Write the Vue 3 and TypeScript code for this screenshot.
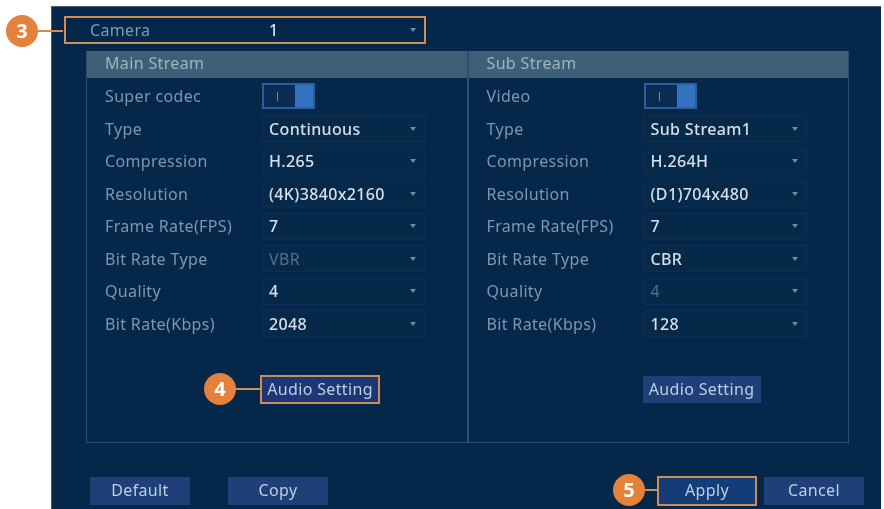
<script setup lang="ts">
interface Row {
  label: string
  value?: string
  toggle?: boolean
  disabled?: boolean
}

const mainRows: Row[] = [
  { label: 'Super codec', toggle: true },
  { label: 'Type', value: 'Continuous' },
  { label: 'Compression', value: 'H.265' },
  { label: 'Resolution', value: '(4K)3840x2160' },
  { label: 'Frame Rate(FPS)', value: '7' },
  { label: 'Bit Rate Type', value: 'VBR', disabled: true },
  { label: 'Quality', value: '4' },
  { label: 'Bit Rate(Kbps)', value: '2048' },
]

const subRows: Row[] = [
  { label: 'Video', toggle: true },
  { label: 'Type', value: 'Sub Stream1' },
  { label: 'Compression', value: 'H.264H' },
  { label: 'Resolution', value: '(D1)704x480' },
  { label: 'Frame Rate(FPS)', value: '7' },
  { label: 'Bit Rate Type', value: 'CBR' },
  { label: 'Quality', value: '4', disabled: true },
  { label: 'Bit Rate(Kbps)', value: '128' },
]

const streams = [
  { title: 'Main Stream', rows: mainRows, marked: true },
  { title: 'Sub Stream', rows: subRows, marked: false },
]
</script>

<template>
  <div class="page">
    <div class="panel">
      <div class="camera-row">
        <span class="camera-label">Camera</span>
        <span class="camera-value">1</span>
        <i class="caret"></i>
      </div>

      <div class="streams">
        <section v-for="s in streams" :key="s.title" class="stream">
          <h2 class="stream-title">{{ s.title }}</h2>
          <div class="rows">
            <div v-for="r in s.rows" :key="r.label" class="row">
              <span class="label">{{ r.label }}</span>
              <span v-if="r.toggle" class="toggle"><b class="tick"></b><b class="knob"></b></span>
              <span v-else class="select" :class="{ disabled: r.disabled }">
                <span>{{ r.value }}</span><i class="caret"></i>
              </span>
            </div>
          </div>
          <div class="audio-wrap">
            <button class="btn audio" :class="{ marked: s.marked }">Audio Setting</button>
          </div>
        </section>
      </div>

      <div class="footer">
        <button class="btn wide">Default</button>
        <button class="btn wide copy">Copy</button>
        <span class="spacer"></span>
        <button class="btn wide apply">Apply</button>
        <button class="btn wide">Cancel</button>
      </div>
    </div>

    <div class="callout c3"><span class="dot">3</span><span class="line"></span></div>
    <div class="callout c4"><span class="dot">4</span><span class="line"></span></div>
    <div class="callout c5"><span class="dot">5</span><span class="line"></span></div>
  </div>
</template>

<style>
html, body { margin: 0; background: #fff; }
</style>

<style scoped>
.page {
  position: relative;
  width: 884px;
  height: 509px;
  overflow: hidden;
  background: #fff;
  font-family: "Noto Sans", "Open Sans", sans-serif;
  font-size: 16px;
  letter-spacing: 0.35px;
  padding: 6px 3px 0 51px;
  box-sizing: border-box;
  filter: blur(0.45px);
}
.panel {
  height: 503px;
  background: #05274a;
  box-sizing: border-box;
  padding: 10px 17px 0 12px;
  border-top: 1px solid #4a6070;
  border-left: 1px solid #3d5b78;
}
.camera-row {
  display: flex;
  align-items: center;
  width: 362px;
  height: 28px;
  box-sizing: border-box;
  border: 2px solid #cf8d52;
  padding: 0 8px 0 24px;
  margin-top: -1px;
}
.camera-label { width: 179px; color: #7f9bb2; }
.camera-value { flex: 1; color: #d5e0ea; font-weight: 500; }
.streams {
  display: flex;
  width: 763px;
  height: 392px;
  margin: 7px 0 0 22px;
  border: 1px solid #2b5076;
  border-top: 0;
  box-sizing: border-box;
}
.stream {
  flex: 1;
  display: flex;
  flex-direction: column;
  min-width: 0;
}
.stream + .stream { border-left: 2px solid #2b5076; }
.stream-title {
  margin: 0;
  height: 27px;
  line-height: 24px;
  padding-left: 18px;
  background: #3f5f77;
  color: #9db4c5;
  font-size: 16px;
  font-weight: 400;
}
.rows {
  padding: 2px 0 0 18px;
}
.row {
  display: flex;
  align-items: center;
  height: 32.5px;
}
.label {
  width: 157px;
  color: #7d98ae;
  white-space: nowrap;
}
.toggle {
  display: flex;
  width: 53px;
  height: 26px;
  box-sizing: border-box;
  border: 2px solid #2a5f9e;
  align-items: stretch;
  background: #0b2c52;
}
.tick {
  width: 31px;
  position: relative;
}
.tick::after {
  content: "";
  position: absolute;
  left: 13px;
  top: 7px;
  width: 1px;
  height: 9px;
  background: #6b8aa6;
}
.knob { flex: 1; background: #3473c2; }
.select {
  display: flex;
  align-items: center;
  justify-content: space-between;
  width: 163px;
  height: 27px;
  box-sizing: border-box;
  padding: 0 8px 0 6px;
  background: #062849;
  border: 1px solid #0c3055;
  color: #d5e0ea;
  font-weight: 500;
}
.select.disabled { color: #56708a; font-weight: 400; }
.caret {
  width: 0;
  height: 0;
  border-left: 3px solid transparent;
  border-right: 3px solid transparent;
  border-top: 4px solid #6f8ba6;
}
.audio-wrap {
  padding: 0 0 0 174px;
  margin-top: 36px;
}
.btn {
  font-family: inherit;
  font-size: 16px;
  letter-spacing: 0.35px;
  color: #bcd0e4;
  background: #1e3f78;
  border: 0;
  padding: 0 0 2px;
  height: 28px;
  box-sizing: border-box;
}
.audio {
  width: 118px;
  height: 27px;
}
.audio.marked {
  width: 120px;
  height: 29px;
  margin: -1px 0 0 -1px;
  border: 2px solid #cf8d52;
  background: #1e3576;
  display: block;
}
.footer {
  display: flex;
  margin: 33px 0 0 26px;
  align-items: center;
  width: 774px;
}
.wide { width: 100px; }
.copy { margin-left: 38px; }
.spacer { flex: 1; }
.apply {
  width: 100px;
  height: 30px;
  margin-right: 7px;
  border: 2px solid #cf8d52;
  background: #143c78;
}
.callout {
  position: absolute;
  display: flex;
  align-items: center;
}
.dot {
  width: 32px;
  height: 32px;
  border-radius: 50%;
  background: #e4813a;
  color: #fff;
  font-weight: 700;
  font-size: 20px;
  letter-spacing: 0;
  line-height: 32px;
  text-align: center;
  flex: none;
}
.line { height: 2px; background: #cf8d52; }
.c3 { left: 6px; top: 15px; }
.c3 .line { width: 25px; }
.c4 { left: 204px; top: 373px; }
.c4 .line { width: 25px; }
.c5 { left: 613px; top: 474px; }
.c5 .line { width: 14px; }
</style>
